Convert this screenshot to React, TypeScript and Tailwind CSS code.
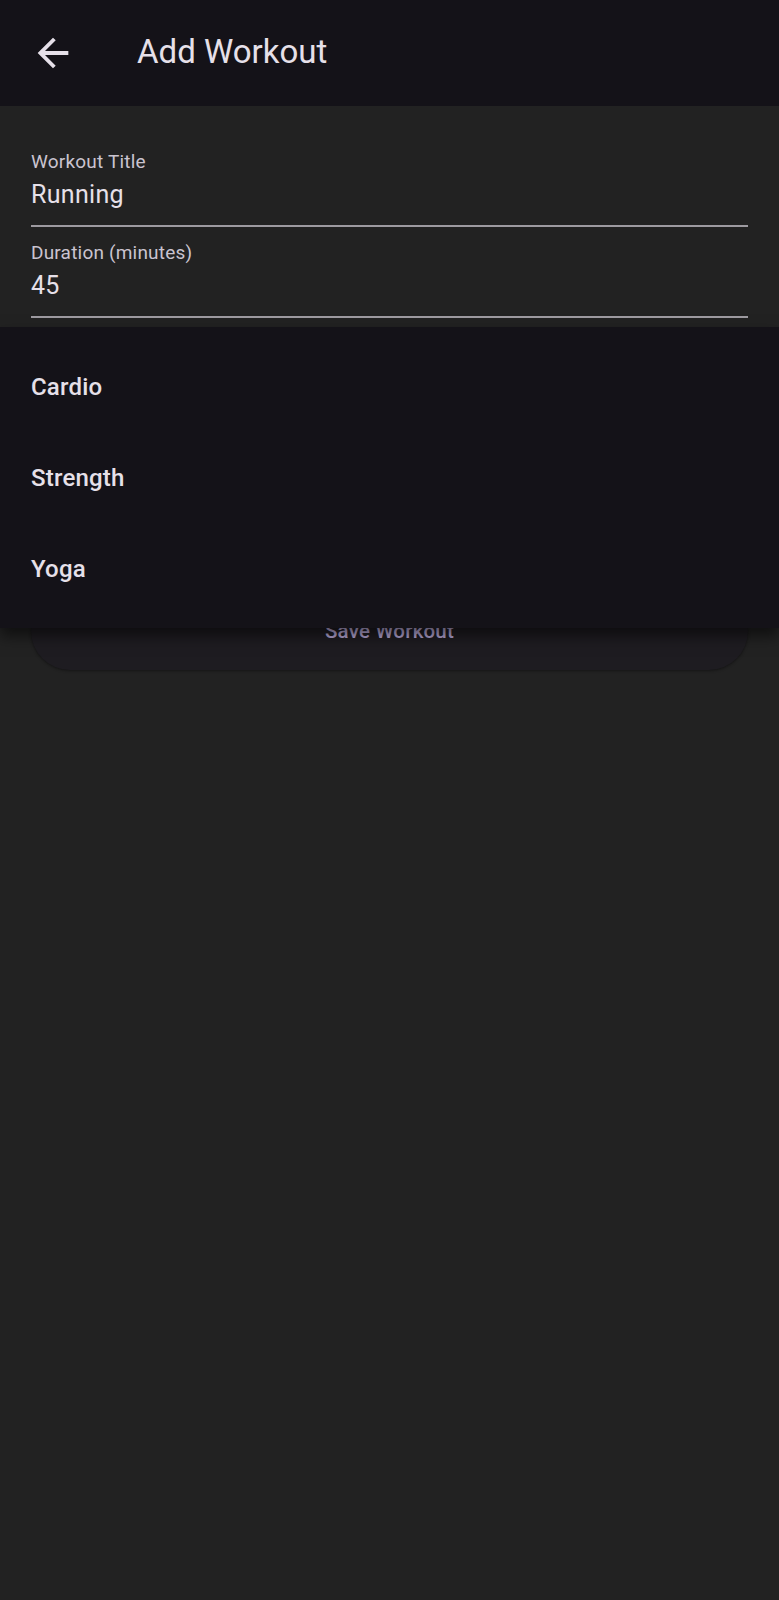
import React from "react";

function Field({ label, value, first }: { label: string; value: string; first?: boolean }) {
  return (
    <div className={first ? "pt-[44px]" : "pt-[14px]"}>
      <div className="h-[24px] leading-[24px] text-[19px] text-[#cac4d0] tracking-[0.2px]">{label}</div>
      <div className="mt-[6px] h-[30px] leading-[30px] text-[25px] text-[#e6e0e9] tracking-[0.3px]">{value}</div>
      <div className="mt-[15px] h-[2px] bg-[#9d9aa0]" />
    </div>
  );
}

export default function App() {
  return (
    <div className="relative min-h-[1600px] w-[779px] bg-[#222222]" style={{ fontFamily: "Roboto, 'Noto Sans', sans-serif" }}>
      <header className="h-[106px] bg-[#141218] flex items-center">
        <div className="w-[137px] flex items-center pl-[30px]">
          <svg width="46" height="46" viewBox="0 0 24 24" fill="#e6e0e9">
            <path d="M20 11H7.83l5.59-5.59L12 4l-8 8 8 8 1.41-1.41L7.83 13H20v-2z" />
          </svg>
        </div>
        <h1 className="text-[33px] leading-[40px] text-[#e6e0e9] font-normal -mt-[2px]">Add Workout</h1>
      </header>

      <main className="px-[31px]">
        <Field label="Workout Title" value="Running" first />
        <Field label="Duration (minutes)" value="45" />
        <div className="h-[274px]" />
        <button className="w-full h-[78px] rounded-full bg-[#1e1c21] shadow-[0_1px_3px_rgba(0,0,0,0.4)] flex items-center justify-center pt-[1px] text-[20.5px] font-medium text-[#b9abd9] tracking-[0.2px]">
          Save Workout
        </button>
      </main>

      <div className="absolute left-0 top-[327px] w-[779px] h-[301px] bg-[#141218] pt-[15px] shadow-[0_8px_14px_rgba(0,0,0,0.55)]">
        {["Cardio", "Strength", "Yoga"].map((t) => (
          <div key={t} className="h-[91px] leading-[91px] px-[31px] text-[24px] font-medium text-[#e6e0e9] tracking-[0.2px]">
            {t}
          </div>
        ))}
      </div>
    </div>
  );
}
